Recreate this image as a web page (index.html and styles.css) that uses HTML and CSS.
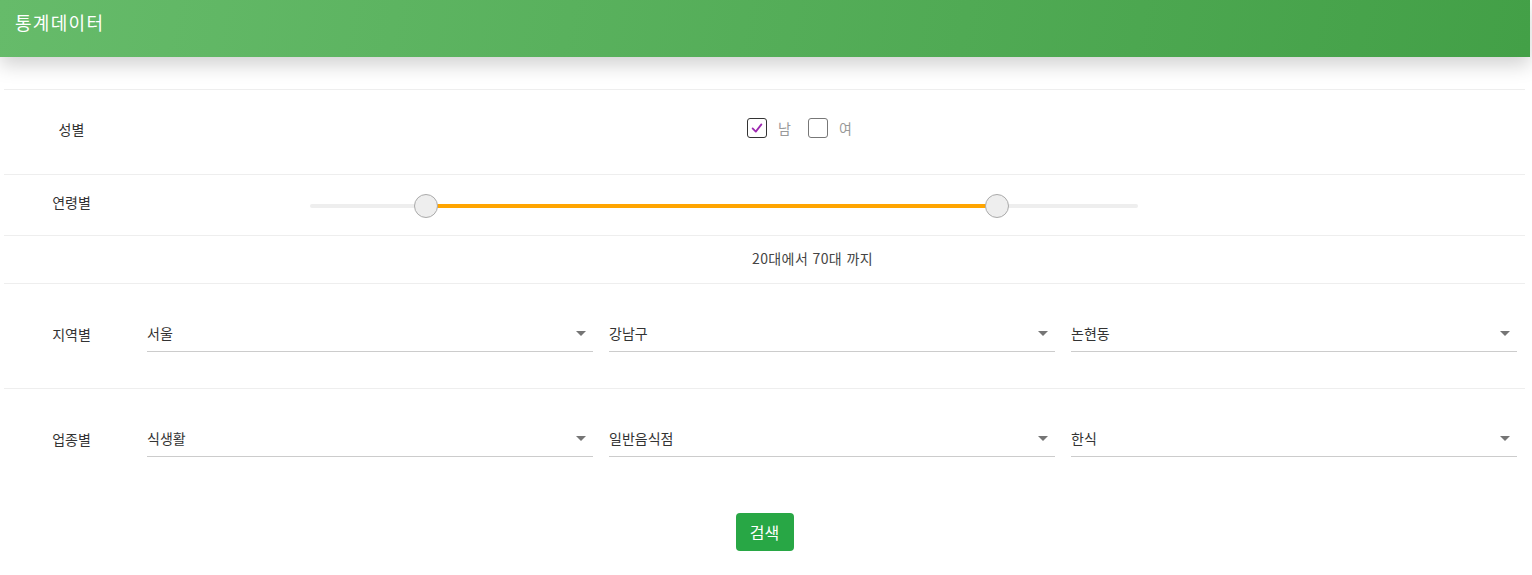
FILE: index.html
```html
<!DOCTYPE html>
<html lang="ko">
<head>
<meta charset="utf-8">
<title>통계데이터</title>
<link rel="stylesheet" href="styles.css">
</head>
<body>
<header class="appbar"><h1 class="title">통계데이터</h1></header>
<main class="form">
  <div class="row row-gender">
    <div class="label">성별</div>
    <div class="content gender">
      <label class="check"><span class="box checked"><svg viewBox="0 0 20 20" width="20" height="20"><path d="M4.5 10.5 L8.5 14.5 L15.5 5.5" fill="none" stroke="#9c27b0" stroke-width="2.2" stroke-linecap="round" stroke-linejoin="round"/></svg></span><span class="ctext">남</span></label>
      <label class="check"><span class="box"></span><span class="ctext">여</span></label>
    </div>
  </div>
  <div class="row row-age">
    <div class="label">연령별</div>
    <div class="content">
      <div class="slider">
        <div class="track"></div>
        <div class="fill"></div>
        <div class="thumb t1"></div>
        <div class="thumb t2"></div>
      </div>
    </div>
  </div>
  <div class="row row-range">
    <div class="range-text">20대에서 70대 까지</div>
  </div>
  <div class="row row-select">
    <div class="label">지역별</div>
    <div class="selects">
      <div class="select"><span>서울</span><i class="arrow"></i></div>
      <div class="select"><span>강남구</span><i class="arrow"></i></div>
      <div class="select"><span>논현동</span><i class="arrow"></i></div>
    </div>
  </div>
  <div class="row row-select">
    <div class="label">업종별</div>
    <div class="selects">
      <div class="select"><span>식생활</span><i class="arrow"></i></div>
      <div class="select"><span>일반음식점</span><i class="arrow"></i></div>
      <div class="select"><span>한식</span><i class="arrow"></i></div>
    </div>
  </div>
  <div class="actions"><button class="btn">검색</button></div>
</main>
</body>
</html>
```
FILE: styles.css
```css
html, body { margin: 0; padding: 0; background: #fff; }
body { font-family: "Noto Sans CJK KR", "Noto Sans", sans-serif; color: #333; width: 1532px; overflow: hidden; }
.appbar {
  width: 1530px; height: 57px; box-sizing: border-box;
  background: linear-gradient(100deg, #66bb6a 0%, #43a047 100%);
  box-shadow: 0 8px 18px rgba(0,0,0,0.18);
  display: flex; align-items: center; padding: 0 15px 14px;
  position: relative; z-index: 2;
}
.title { margin: 0; font-size: 18px; font-weight: 400; color: #fff; line-height: 1; letter-spacing: 1.3px; }
.form { margin: 32px 0 0 4px; width: 1521px; }
.row { display: flex; align-items: center; border-top: 1px solid #eee; box-sizing: border-box; }
.label { width: 135px; text-align: center; font-size: 14px; color: #333; flex: none; }
.row-gender { height: 85px; align-items: flex-start; }
.row-gender .label { padding-top: 29px; }
.gender { display: flex; padding: 28px 0 0 608px; gap: 0; }
.check { display: flex; align-items: center; font-size: 14px; margin-right: 17px; }
.box { width: 20px; height: 20px; box-sizing: border-box; border: 1.5px solid #777; border-radius: 3px; display: flex; align-items: center; justify-content: center; }
.box.checked { border-color: #333; }
.box svg { width: 16px; height: 16px; }
.ctext { color: #999; margin-left: 11px; }
.row-age { height: 61px; }
.row-age .label { margin-top: -6px; }
.slider { position: relative; margin-left: 171px; width: 828px; height: 24px; margin-top: 1px; }
.track { position: absolute; left: 0; right: 0; top: 10px; height: 4px; border-radius: 2px; background: #eee; }
.fill { position: absolute; left: 116px; width: 571px; top: 10px; height: 4px; background: #ffa500; }
.thumb { position: absolute; top: 0; width: 24px; height: 24px; box-sizing: border-box; border-radius: 50%; background: #eee; border: 1px solid #aaa; }
.t1 { left: 104px; }
.t2 { left: 675px; }
.row-range { height: 48px; }
.range-text { font-size: 14px; letter-spacing: 0.4px; color: #444; padding-left: 748px; margin-top: -3px; }
.row-select { height: 105px; }
.row-select .label { margin-top: -4px; }
.selects { display: flex; gap: 16px; margin-left: 8px; width: 1370px; margin-top: -5px; }
.select { flex: 1; height: 37px; box-sizing: border-box; border-bottom: 1px solid #ccc; display: flex; align-items: center; justify-content: space-between; font-size: 14px; color: #333; padding: 0 7px 0 0; }
.arrow { width: 0; height: 0; border-left: 5px solid transparent; border-right: 5px solid transparent; border-top: 5px solid #757575; }
.actions { display: flex; justify-content: center; padding: 20px 0 0 0; }
.btn { font-family: inherit; font-size: 16px; color: #fff; background: #28a745; border: none; border-radius: 4px; width: 58px; height: 38px; padding: 0; }
```
